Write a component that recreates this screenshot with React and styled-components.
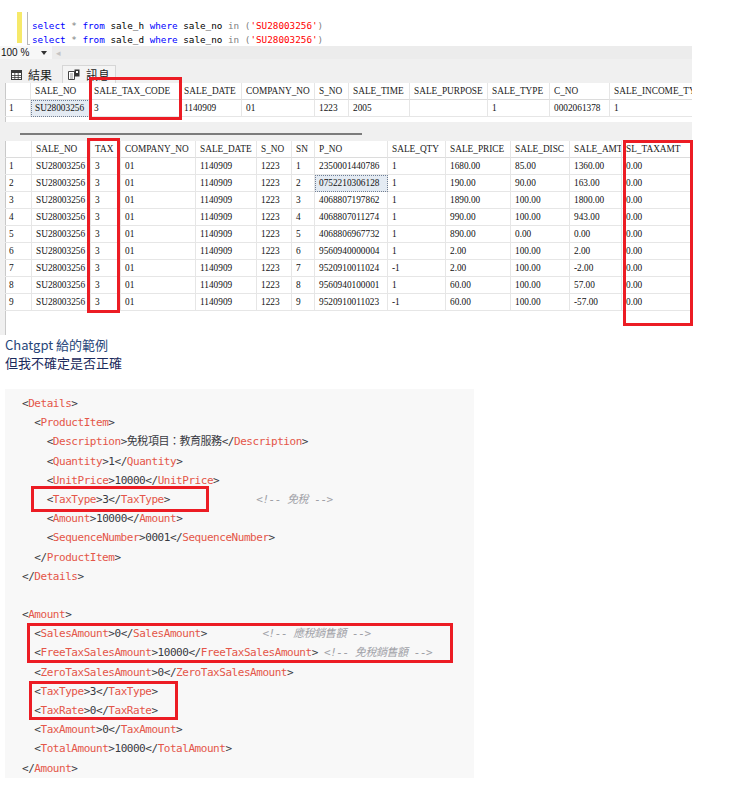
import styled, { createGlobalStyle } from "styled-components";

const GlobalStyle = createGlobalStyle`
  body {
    margin: 0;
    background: #fff;
  }
`;

const grid1Cols = [
  ["", 26], ["SALE_NO", 59], ["SALE_TAX_CODE", 90], ["SALE_DATE", 62], ["COMPANY_NO", 73],
  ["S_NO", 34], ["SALE_TIME", 61], ["SALE_PURPOSE", 78], ["SALE_TYPE", 62], ["C_NO", 60],
  ["SALE_INCOME_TY", 90],
];
const grid1Rows = [
  ["1", "SU28003256", "3", "1140909", "01", "1223", "2005", "", "1", "0002061378", "1"],
];

const grid2Cols = [
  ["", 27], ["SALE_NO", 59], ["TAX", 30], ["COMPANY_NO", 75], ["SALE_DATE", 61], ["S_NO", 35],
  ["SN", 23], ["P_NO", 73], ["SALE_QTY", 58], ["SALE_PRICE", 65], ["SALE_DISC", 59],
  ["SALE_AMT", 52], ["SL_TAXAMT", 70],
];
const items = [
  ["2350001440786", "1", "1680.00", "85.00", "1360.00"],
  ["0752210306128", "1", "190.00", "90.00", "163.00"],
  ["4068807197862", "1", "1890.00", "100.00", "1800.00"],
  ["4068807011274", "1", "990.00", "100.00", "943.00"],
  ["4068806967732", "1", "890.00", "0.00", "0.00"],
  ["9560940000004", "1", "2.00", "100.00", "2.00"],
  ["9520910011024", "-1", "2.00", "100.00", "-2.00"],
  ["9560940100001", "1", "60.00", "100.00", "57.00"],
  ["9520910011023", "-1", "60.00", "100.00", "-57.00"],
];
const grid2Rows = items.map((it, i) => [
  String(i + 1), "SU28003256", "3", "01", "1140909", "1223", String(i + 1),
  it[0], it[1], it[2], it[3], it[4], "0.00",
]);

const xmlLines = [
  "<Details>",
  "  <ProductItem>",
  "    <Description>免稅項目：教育服務</Description>",
  "    <Quantity>1</Quantity>",
  "    <UnitPrice>10000</UnitPrice>",
  "    <TaxType>3</TaxType>              <!-- 免稅 -->",
  "    <Amount>10000</Amount>",
  "    <SequenceNumber>0001</SequenceNumber>",
  "  </ProductItem>",
  "</Details>",
  "",
  "<Amount>",
  "  <SalesAmount>0</SalesAmount>         <!-- 應稅銷售額 -->",
  "  <FreeTaxSalesAmount>10000</FreeTaxSalesAmount> <!-- 免稅銷售額 -->",
  "  <ZeroTaxSalesAmount>0</ZeroTaxSalesAmount>",
  "  <TaxType>3</TaxType>",
  "  <TaxRate>0</TaxRate>",
  "  <TaxAmount>0</TaxAmount>",
  "  <TotalAmount>10000</TotalAmount>",
  "</Amount>",
];

function renderXml(line) {
  const out = [];
  const re = /(<!--.*?-->)|(<\/?)([A-Za-z]+)(>)|([^<]+)/g;
  let m;
  let k = 0;
  while ((m = re.exec(line)) !== null) {
    if (m[1]) out.push(<Comment key={k++}>{m[1]}</Comment>);
    else if (m[2]) {
      out.push(<span key={k++}>{m[2]}</span>);
      out.push(<TagName key={k++}>{m[3]}</TagName>);
      out.push(<span key={k++}>{m[4]}</span>);
    } else out.push(<span key={k++}>{m[5]}</span>);
  }
  return out;
}

function SqlLine({ table }) {
  return (
    <SqlText>
      <Kw>select</Kw> <Op>*</Op> <Kw>from</Kw> sale_{table} <Kw>where</Kw> sale_no <Op>in</Op>{" "}
      <Op>(</Op><Str>'SU28003256'</Str><Op>)</Op>
    </SqlText>
  );
}

function DataGrid({ cols, rows, selected }) {
  return (
    <>
      <GridRow>
        {cols.map(([name, w], i) => (
          <HeadCell key={i} $w={w}>{name}</HeadCell>
        ))}
      </GridRow>
      {rows.map((row, r) => (
        <GridRow key={r}>
          {row.map((v, c) => (
            <Cell key={c} $w={cols[c][1]} $selected={selected && selected[0] === r && selected[1] === c}>
              {v}
            </Cell>
          ))}
        </GridRow>
      ))}
    </>
  );
}

function GridIcon() {
  return (
    <svg width="11" height="10" viewBox="0 0 11 10">
      <rect x="0.5" y="0.5" width="10" height="9" fill="#fff" stroke="#3a3a3a" />
      <rect x="0.5" y="0.5" width="10" height="2.5" fill="#3a3a3a" />
      <path d="M0.5 5.5h10M0.5 7.5h10M3.8 0.5v9M7.2 0.5v9" stroke="#3a3a3a" strokeWidth="0.8" />
    </svg>
  );
}

function MessageIcon() {
  return (
    <svg width="12" height="11" viewBox="0 0 12 11">
      <path d="M0.5 2.5h6v8h-6z" fill="#fff" stroke="#444" />
      <path d="M2 5h3M2 7h3M2 9h3" stroke="#777" strokeWidth="0.8" />
      <rect x="6.5" y="0.5" width="5" height="7" fill="#333" />
      <rect x="8" y="2" width="2" height="2" fill="#fff" />
    </svg>
  );
}

export default function App() {
  return (
    <Page>
      <GlobalStyle />
      <Editor>
        <YellowMark />
        <EditorRule />
        <SqlBlock>
          <SqlLine table="h" />
          <SqlLine table="d" />
        </SqlBlock>
      </Editor>

      <ResultsPanel>
        <ZoomBar>
          <ZoomField>
            100 %
            <svg width="6" height="4" viewBox="0 0 6 4">
              <path d="M0 0h6L3 4z" fill="#333" />
            </svg>
          </ZoomField>
          <ScrollArrow>◂</ScrollArrow>
        </ZoomBar>
        <TabStrip>
          <Tab>
            <GridIcon />
            結果
          </Tab>
          <Tab $boxed>
            <MessageIcon />
            訊息
          </Tab>
        </TabStrip>
        <GridPane $h={39}>
          <DataGrid cols={grid1Cols} rows={grid1Rows} selected={[0, 1]} />
        </GridPane>
        <Splitter>
          <SplitterBar />
        </Splitter>
        <GridPane $h={194}>
          <DataGrid cols={grid2Cols} rows={grid2Rows} selected={[1, 7]} />
        </GridPane>

        <Highlight $x={89} $y={31} $w={93} $h={43} />
        <Highlight $x={87} $y={92} $w={33} $h={175} />
        <Highlight $x={623} $y={94} $w={70} $h={186} />
      </ResultsPanel>

      <Notes>
        <Note $tone="#27467a">Chatgpt 給的範例</Note>
        <Note $tone="#1b2a5c">但我不確定是否正確</Note>
      </Notes>

      <CodeBlock>
        {xmlLines.map((line, i) => (
          <CodeLine key={i}>{line ? renderXml(line) : " "}</CodeLine>
        ))}
        <Highlight $x={26} $y={97} $w={178} $h={26} />
        <Highlight $x={22} $y={234} $w={426} $h={40} />
        <Highlight $x={24} $y={292} $w={149} $h={39} />
      </CodeBlock>
    </Page>
  );
}

const Page = styled.div`
  width: 740px;
  min-height: 787px;
  display: flex;
  flex-direction: column;
  font-family: "Noto Sans CJK TC", "Noto Sans", sans-serif;
`;

const Editor = styled.div`
  display: flex;
  align-items: flex-start;
  padding-top: 12px;
  height: 34px;
`;

const YellowMark = styled.div`
  margin-left: 17px;
  width: 5px;
  height: 31px;
  background: #f6e96a;
`;

const EditorRule = styled.div`
  margin-left: 5px;
  width: 3px;
  height: 33px;
  border-left: 1px solid #b8b8b8;
  border-bottom: 1px solid #b8b8b8;
  box-sizing: border-box;
`;

const SqlBlock = styled.div`
  margin-left: 2px;
  padding-top: 7px;
`;

const SqlText = styled.div`
  font-family: "DejaVu Sans Mono", "Liberation Mono", monospace;
  font-size: 9.3px;
  line-height: 14px;
  white-space: pre;
  color: #000;
`;

const Kw = styled.span`
  color: #0000ff;
`;

const Op = styled.span`
  color: #808080;
`;

const Str = styled.span`
  color: #ff0000;
`;

const ResultsPanel = styled.div`
  position: relative;
  width: 692px;
  background: #f0f0f0;
  display: flex;
  flex-direction: column;
`;

const ZoomBar = styled.div`
  height: 13px;
  display: flex;
  align-items: center;
  background: #ececec;
`;

const ZoomField = styled.div`
  width: 52px;
  height: 13px;
  display: flex;
  align-items: center;
  justify-content: space-between;
  padding: 0 5px 0 1px;
  box-sizing: border-box;
  background: #f7f7f7;
  font-family: "Liberation Sans", Arial, sans-serif;
  font-size: 10px;
  color: #111;
`;

const ScrollArrow = styled.span`
  margin-left: 4px;
  font-size: 9px;
  color: #c4c4c4;
  font-family: "DejaVu Sans", sans-serif;
`;

const TabStrip = styled.div`
  height: 24px;
  display: flex;
  align-items: flex-end;
  padding-left: 5px;
  gap: 4px;
`;

const Tab = styled.div`
  height: 18px;
  display: flex;
  align-items: center;
  gap: 6px;
  padding: 0 5px;
  box-sizing: border-box;
  font-size: 12px;
  color: #1a1a1a;
  background: ${(p) => (p.$boxed ? "#f4f4f4" : "transparent")};
  border: 1px solid ${(p) => (p.$boxed ? "#d6d6d6" : "transparent")};
  border-bottom: none;
`;

const GridPane = styled.div`
  height: ${(p) => p.$h}px;
  margin-left: 5px;
  width: 687px;
  background: #fff;
  overflow: hidden;
  box-shadow: inset 1px 0 0 #c9c9c9;
`;

const GridRow = styled.div`
  display: flex;
  height: 17px;
`;

const Cell = styled.div`
  flex: 0 0 ${(p) => p.$w}px;
  height: 17px;
  box-sizing: border-box;
  padding-left: 4px;
  border-right: 1px solid #e6e6e6;
  border-bottom: 1px solid #e6e6e6;
  font-family: "Liberation Serif", "Times New Roman", serif;
  font-size: 9.3px;
  line-height: 16px;
  color: #111;
  white-space: nowrap;
  overflow: hidden;
  background: ${(p) => (p.$selected ? "#e4ebf3" : "transparent")};
  outline: ${(p) => (p.$selected ? "1px dotted #6f7f96" : "none")};
  outline-offset: -1px;
`;

const HeadCell = styled(Cell)`
  border-bottom: 1px solid #dcdcdc;
  color: #222;
`;

const Splitter = styled.div`
  height: 19px;
  display: flex;
  align-items: flex-start;
`;

const SplitterBar = styled.div`
  margin: 11px 0 0 20px;
  width: 342px;
  height: 2px;
  background: #7c7c7c;
`;

const Highlight = styled.div`
  position: absolute;
  left: ${(p) => p.$x}px;
  top: ${(p) => p.$y}px;
  width: ${(p) => p.$w}px;
  height: ${(p) => p.$h}px;
  border: 3px solid #ec1c24;
  box-sizing: border-box;
  pointer-events: none;
`;

const Notes = styled.div`
  display: flex;
  flex-direction: column;
  padding: 1px 0 0 5px;
`;

const Note = styled.div`
  font-size: 13px;
  line-height: 18px;
  color: ${(p) => p.$tone};
`;

const CodeBlock = styled.div`
  position: relative;
  margin: 17px 0 0 5px;
  width: 469px;
  padding: 5px 0 0 17px;
  box-sizing: border-box;
  background: #f8f8f8;
`;

const CodeLine = styled.div`
  font-family: "DejaVu Sans Mono", "Noto Sans CJK TC", monospace;
  font-size: 11px;
  letter-spacing: -0.46px;
  line-height: 19.2px;
  height: 19.2px;
  white-space: pre;
  color: #383a42;
`;

const TagName = styled.span`
  color: #e45649;
`;

const Comment = styled.span`
  color: #a0a1a7;
  font-style: italic;
`;
